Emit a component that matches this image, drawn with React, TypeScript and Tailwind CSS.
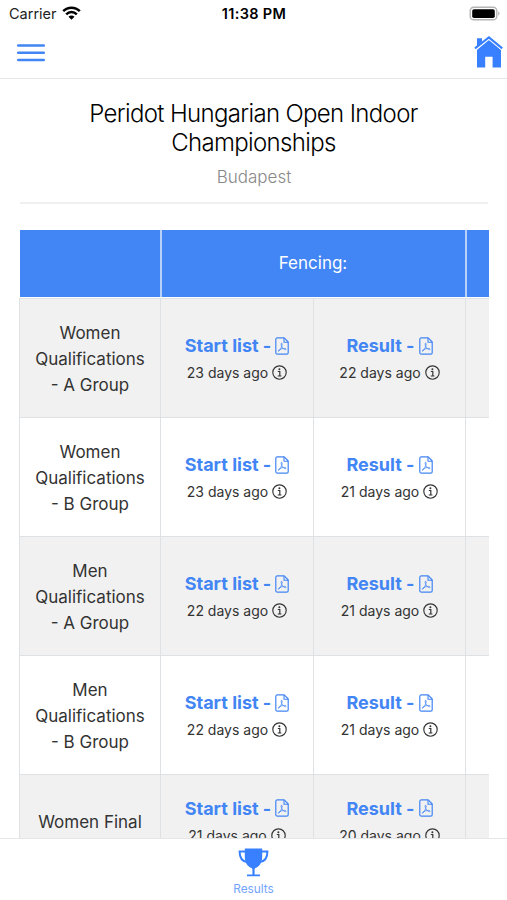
import React from 'react';

// Rows of the results table
const rows = [
  { id: 1, lines: ['Women', 'Qualifications', '- A Group'], start: '23 days ago', result: '22 days ago' },
  { id: 2, lines: ['Women', 'Qualifications', '- B Group'], start: '23 days ago', result: '21 days ago' },
  { id: 3, lines: ['Men', 'Qualifications', '- A Group'], start: '22 days ago', result: '21 days ago' },
  { id: 4, lines: ['Men', 'Qualifications', '- B Group'], start: '22 days ago', result: '21 days ago' },
  { id: 5, lines: ['Women Final'], start: '21 days ago', result: '20 days ago' },
];

const PdfIcon: React.FC = () => (
  <svg className="h-[18px] w-[14px]" viewBox="0 0 14 18" fill="none" stroke="currentColor" strokeLinejoin="round">
    <path d="M2.200.9h7L13.200 5v10.700c0 .8-.6 1.400-1.400 1.400H2.200c-.8 0-1.400-.6-1.400-1.400V2.300c0-.8.6-1.400 1.400-1.400z" strokeWidth="1.200" />
    <path d="M9 1v4.200h4.200" strokeWidth="1.100" />
    <path d="M6.600 6.200c-.8 0-.5 2 .1 3.200 1 2 2.500 3.300 3.700 3.300 1 0 .9-1.300-.7-1.300-2 0-4.300.7-5.700 1.600-1.300.9-.7 1.700.1.900 1.200-1.200 2.500-3.800 2.900-5.600.3-1.200.1-2.100-.4-2.100z" strokeWidth=".8" />
  </svg>
);

const InfoIcon: React.FC = () => (
  <svg className="h-[15px] w-[15px]" viewBox="0 0 15 15">
    <circle cx="7.500" cy="7.500" r="6.700" fill="none" stroke="currentColor" strokeWidth="1.150" />
    <circle cx="7.400" cy="4.200" r="1" fill="currentColor" />
    <path d="M5.800 6.500h2v4.400M5.700 11h3.700" fill="none" stroke="currentColor" strokeWidth="1.200" />
  </svg>
);

const StatusBar: React.FC = () => (
  <div className="grid h-7 shrink-0 grid-cols-3 items-center pl-[9px] pr-[6px] text-black">
    <div className="flex items-center gap-[5px]">
      <span className="text-[14.5px] text-[#222]">Carrier</span>
      <svg className="-mt-0.5 h-[14px] w-[19px]" viewBox="0 0 19 14">
        <g fill="none" stroke="currentColor" strokeWidth="2.500">
          <path d="M1.200 5.200C5.800.5 13.200.5 17.800 5.200" />
          <path d="M4.200 8.300c3-3 7.600-3 10.600 0" />
        </g>
        <path d="M9.500 13.700 6.500 10.700c1.700-1.600 4.300-1.600 6 0z" fill="currentColor" />
      </svg>
    </div>
    <span className="-ml-0.5 text-center text-[14.5px] font-semibold tracking-[0.35px]">11:38 PM</span>
    <svg className="-mt-0.5 h-[15px] w-[32px] justify-self-end" viewBox="0 0 32 15">
      <rect x="1.200" y="1.200" width="26.600" height="12.600" rx="3.600" fill="#fff" stroke="#b5b5b5" strokeWidth="1.400" />
      <rect x="3.200" y="3.200" width="22.600" height="8.800" rx="1.800" fill="#000" />
      <path d="M29.200 5.300c1.800.7 1.800 3.700 0 4.400z" fill="#b5b5b5" />
    </svg>
  </div>
);

const NavBar: React.FC = () => (
  <div className="flex h-[51px] shrink-0 items-start justify-between border-b border-[#e6e6e6] pl-[17px] pr-[4px]">
    <svg className="mt-4 h-[18px] w-[28px]" viewBox="0 0 28 18">
      <path d="M1.200 1.500h25.600M1.200 8.800h25.600M1.200 16.100h25.600" stroke="#4285f4" strokeWidth="2.500" strokeLinecap="round" />
    </svg>
    <svg className="mt-[8px] h-[32px] w-[29px]" viewBox="0 0 29 32">
      <path d="M3 2.300h5v5L3 11z" fill="#3880ff" />
      <path d="M3 13.700 14.900 3.500 27 13.700v17.800h-8.400V20.800h-7.400v10.700H3z" fill="#3880ff" />
      <path d="M1.500 14 14.900 3.300 28 14" fill="none" stroke="#fff" strokeWidth="1.300" />
      <path d="M1 12.400 14.900 1.400 28.200 12.400" fill="none" stroke="#3880ff" strokeWidth="2.100" />
    </svg>
  </div>
);

// A document link with its age below
const DocCell: React.FC<{ label: string; age: string }> = ({ label, age }) => (
  <div className="flex flex-col items-center justify-center border-r border-[#dfe2e5] pt-[2px]">
    <a className="flex h-[27px] items-center gap-[4px] whitespace-pre text-[18px] font-bold text-[#4285f4]">
      {label} -
      <PdfIcon />
    </a>
    <span className="flex h-[27px] items-center gap-[4px] text-[14px] text-[#333]">
      {age}
      <InfoIcon />
    </span>
  </div>
);

const ResultsTable: React.FC = () => (
  <div className="mx-[19px] mt-[26px] w-[470px] overflow-hidden">
    <div className="mb-px grid h-[67px] grid-cols-[142px_305px_22px] items-stretch border-l border-white bg-[#4285f4] text-white">
      <div className="border-r-2 border-[#b9d0fa]" />
      <div className="flex items-center justify-center border-r-2 border-[#b9d0fa] pr-px pt-px text-[17px]">Fencing:</div>
      <div />
    </div>
    {rows.map((row) => (
      <div
        key={row.id}
        className={`grid grid-cols-[141px_153px_152px_23px] border-l border-t border-[#dfe2e5] odd:bg-white even:bg-[#f1f1f1] ${row.lines.length > 1 ? 'h-[119px]' : 'h-[92px]'}`}
      >
        <div className="flex flex-col items-center justify-center border-r border-[#dfe2e5] pt-[4px] text-[17px] leading-[25.7px] text-[#333]">
          {row.lines.map((line) => (
            <span key={line}>{line}</span>
          ))}
        </div>
        <DocCell label="Start list" age={row.start} />
        <DocCell label="Result" age={row.result} />
        <div />
      </div>
    ))}
  </div>
);

const TabBar: React.FC = () => (
  <div className="flex h-[62px] shrink-0 flex-col items-center border-t border-[#e6e6e6] bg-white pt-[9px] text-[#3880ff]">
    <svg className="h-[29px] w-[31px]" viewBox="0 0 31 29">
      <path d="M6.800.500h17.400v8.300c0 6-3 10-6.800 11.300l-.8 1v5.500h5.400v1.700H9v-1.700h5.400v-5.500l-.8-1C9.800 18.800 6.800 14.800 6.800 8.800z" fill="currentColor" />
      <path d="M7.300 3.400H1.600c0 6 2.400 9.800 7.400 10.500M23.700 3.400h5.700c0 6-2.400 9.800-7.400 10.500" fill="none" stroke="currentColor" strokeWidth="2" />
    </svg>
    <span className="mt-[4px] text-[11.8px] leading-4 text-[#73a5ff]">Results</span>
  </div>
);

export default function App() {
  return (
    <div className="flex h-[900px] w-[507px] flex-col overflow-hidden bg-white font-['Inter','Liberation_Sans',sans-serif]">
      <StatusBar />
      <NavBar />
      <main className="min-h-0 flex-1 overflow-hidden">
        <header className="ml-5 mr-[19px] h-[125px] border-b-2 border-[#f0f0f0] pt-5 text-center">
          <h1 className="-ml-px text-[24px] font-light leading-[29px] tracking-[-0.66px] text-black">
            Peridot Hungarian Open Indoor
            <br />
            Championships
          </h1>
          <p className="mt-[8px] text-[17px] font-light leading-6 text-[#888]">Budapest</p>
        </header>
        <ResultsTable />
      </main>
      <TabBar />
    </div>
  );
}
